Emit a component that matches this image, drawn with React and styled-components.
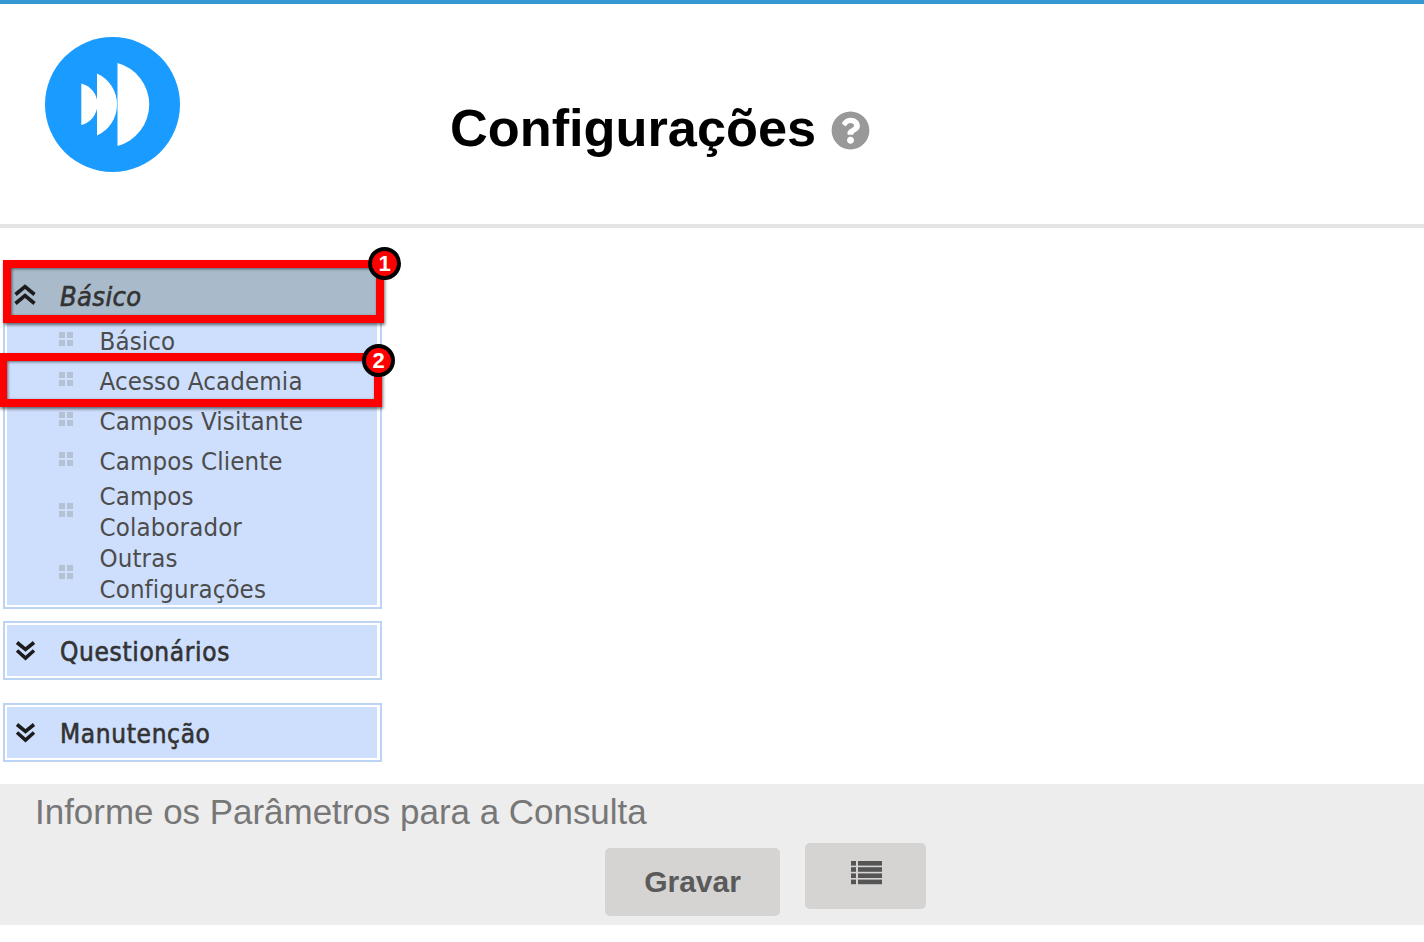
import React from "react";
import styled, { createGlobalStyle } from "styled-components";
import { FaQuestionCircle } from "react-icons/fa";

const Global = createGlobalStyle`
  html, body { margin: 0; padding: 0; background: #fff; }
  body { font-family: "Liberation Sans", Arial, sans-serif; }
`;
const Page = styled.div`
  position: relative;
  width: 1424px;
  height: 942px;
  overflow: hidden;
  border-top: 4px solid #3498d2;
  box-sizing: border-box;
`;
const Header = styled.header`
  height: 220px;
  border-bottom: 4px solid #e5e5e5;
  box-sizing: content-box;
  display: flex;
  padding-left: 45px;
`;
const Logo = styled.svg`
  width: 135px;
  height: 135px;
  margin-top: 33px;
  flex: none;
`;
const TitleRow = styled.div`
  display: flex;
  align-items: center;
  gap: 15px;
  margin-left: 270px;
  height: 52px;
  margin-top: 98px;
`;
const Title = styled.h1`
  margin: 0;
  font: bold 52.3px/52px "Liberation Sans", Arial, sans-serif;
  color: #000;
`;
const Help = styled(FaQuestionCircle)`
  width: 39px;
  height: 39px;
  color: #999;
  margin-top: 4px;
`;
const Sidebar = styled.nav`
  width: 379px;
  margin-left: 3px;
  padding-top: 35px;
  height: 556px;
  box-sizing: border-box;
`;
const Panel = styled.section`
  border: 2px solid #bcd4f4;
  padding: 2px;
  background: #fff;
  margin-bottom: ${(p) => p.$gap}px;
`;
const PanelBody = styled.div`
  background: #cedffd;
  margin-right: 1px;
`;
const PanelHead = styled.div`
  display: flex;
  align-items: center;
  box-sizing: border-box;
  height: ${(p) => p.$h}px;
  padding-top: ${(p) => (p.$open ? 5 : 2)}px;
  background: ${(p) => (p.$open ? "#a9bbcb" : "transparent")};
  font-family: "DejaVu Sans", sans-serif;
  font-stretch: condensed;
  font-size: ${(p) => (p.$open ? 27 : 26)}px;
  letter-spacing: ${(p) => (p.$open ? 0.4 : 0.65)}px;
  -webkit-text-stroke: 0.6px #333;
  font-style: ${(p) => (p.$open ? "italic" : "normal")};
  color: #333;
`;
const Chevron = styled.svg`
  width: 22px;
  height: 22px;
  margin-left: 7px;
  margin-right: 24px;
  flex: none;
  position: relative;
  top: ${(p) => p.$shift}px;
`;
const Row = styled.div`
  display: flex;
  align-items: center;
  min-height: 40px;
  font-family: "DejaVu Sans", sans-serif;
  font-stretch: condensed;
  font-size: 25.6px;
  letter-spacing: 0.12px;
  line-height: 31px;
  color: #4c4c4c;
`;
const Dots = styled.svg`
  width: 14px;
  height: 14px;
  margin-left: 52px;
  margin-right: 26.5px;
  margin-top: -4px;
  flex: none;
`;
const RowText = styled.span`
  display: block;
  max-width: 230px;
`;
const Mark = styled.div`
  position: absolute;
  box-sizing: border-box;
  left: ${(p) => p.$x}px;
  top: ${(p) => p.$y}px;
  width: ${(p) => p.$w}px;
  height: ${(p) => p.$h}px;
  border: 8px solid #f00;
  box-shadow: 1px 2px 3px rgba(0,0,0,.55), inset 1px 1px 3px rgba(0,0,0,.55);
`;
const Badge = styled.div`
  position: absolute;
  box-sizing: border-box;
  left: ${(p) => p.$x}px;
  top: ${(p) => p.$y}px;
  width: 33px;
  height: 33px;
  border-radius: 50%;
  background: #f00;
  border: 4px solid #000;
  color: #fff;
  font: bold 22px/25px "Liberation Sans", Arial, sans-serif;
  text-align: center;
`;
const Footer = styled.footer`
  height: 141px;
  background: #ededed;
  box-sizing: border-box;
  padding: 8px 0 0 35px;
`;
const Hint = styled.div`
  font-size: 34.95px;
  line-height: 40px;
  color: #777;
`;
const Buttons = styled.div`
  display: flex;
  align-items: flex-start;
  margin-left: 570px;
  gap: 25px;
  margin-top: 11px;
`;
const SaveButton = styled.button`
  width: 175px;
  height: 68px;
  margin-top: 5px;
  border: 0;
  border-radius: 5px;
  background: #d5d4d3;
  color: #5a5a5a;
  font: bold 30px "Liberation Sans", Arial, sans-serif;
`;
const ListButton = styled.button`
  width: 121px;
  height: 66px;
  border: 0;
  border-radius: 5px;
  background: #d5d4d3;
  display: flex;
  justify-content: center;
  padding: 18px 0 0 2px;
`;

const ChevUp = () => (
  <Chevron $shift={-2} viewBox="0 0 22 22" fill="none" stroke="#1c1c1c" strokeWidth="3.6">
    <path d="M1.5 10.5 11 2.5l9.500 8M1.500 19.500 11 11.500l9.500 8" />
  </Chevron>
);
const ChevDown = () => (
  <Chevron $shift={-1} viewBox="0 0 22 22" fill="none" stroke="#1c1c1c" strokeWidth="3.6">
    <path d="M3 2.500l8.500 7 8.500-7M3 10.500l8.500 7.500 8.500-7.500" />
  </Chevron>
);
const Grip = () => (
  <Dots viewBox="0 0 14 14" fill="#b4c2d4">
    <rect x="0" y="0" width="6" height="6" />
    <rect x="8" y="0" width="6" height="6" />
    <rect x="0" y="8" width="6" height="6" />
    <rect x="8" y="8" width="6" height="6" />
  </Dots>
);
const items = ["Básico", "Acesso Academia", "Campos Visitante", "Campos Cliente", "Campos Colaborador", "Outras Configurações"];

export default function App() {
  return (
    <Page>
      <Global />
      <Header>
        <Logo viewBox="0 0 135 135">
          <circle cx="67.5" cy="67.5" r="67.5" fill="#1a9bff" />
          <g fill="#fff">
            <path d="M36.3 46.5A21.4 21.4 0 0 1 36.3 88Z" />
            <path d="M52 36.5A34 34 0 0 1 52 98.500Z" />
            <path d="M72.500 26A43 43 0 0 1 72.500 109Z" />
          </g>
        </Logo>
        <TitleRow>
          <Title>Configurações</Title>
          <Help />
        </TitleRow>
      </Header>
      <Sidebar>
        <Panel $gap={12}>
          <PanelBody>
            <PanelHead $open $h={54}><ChevUp />Básico</PanelHead>
            {items.map((t) => (
              <Row key={t}><Grip /><RowText>{t}</RowText></Row>
            ))}
          </PanelBody>
        </Panel>
        <Panel $gap={23}>
          <PanelBody><PanelHead $h={51}><ChevDown />Questionários</PanelHead></PanelBody>
        </Panel>
        <Panel $gap={0}>
          <PanelBody><PanelHead $h={51}><ChevDown />Manutenção</PanelHead></PanelBody>
        </Panel>
      </Sidebar>
      <Footer>
        <Hint>Informe os Parâmetros para a Consulta</Hint>
        <Buttons>
          <SaveButton>Gravar</SaveButton>
          <ListButton>
            <svg width="31" height="24" viewBox="0 0 31 24" fill="#555">
              {[0, 6.2, 12.4, 18.6].map((y) => (
                <g key={y}>
                  <rect x="0" y={y} width="5" height="4.6" />
                  <rect x="7" y={y} width="24" height="4.6" />
                </g>
              ))}
            </svg>
          </ListButton>
        </Buttons>
      </Footer>
      <Mark $x={3} $y={256} $w={381} $h={63} />
      <Mark $x={-1} $y={349} $w={383} $h={54} />
      <Badge $x={368} $y={243}>1</Badge>
      <Badge $x={362} $y={340}>2</Badge>
    </Page>
  );
}
